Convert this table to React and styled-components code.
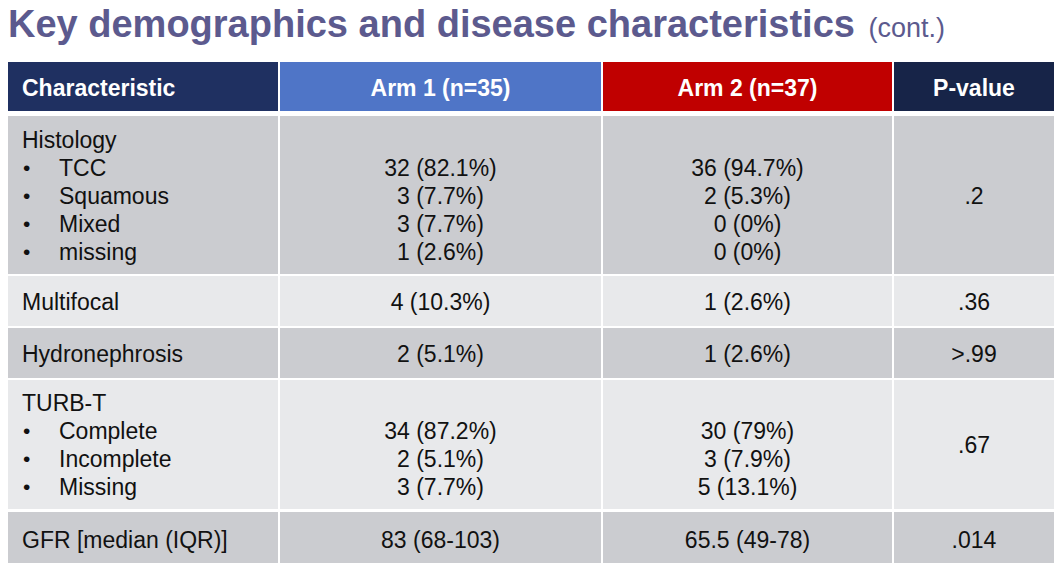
import React from 'react';
import styled, { createGlobalStyle } from 'styled-components';

const GlobalStyle = createGlobalStyle`
    body {
        margin: 0;
        background: #fff;
        font-family: "Liberation Sans", Arial, sans-serif;
    }
`;

const Page = styled.div`
    width: 1060px;
    height: 568px;
    padding: 5px 0 0 8px;
    box-sizing: border-box;
    overflow: hidden;
`;

const Title = styled.h1`
    margin: 0 0 19px 0;
    height: 38px;
    font-size: 38px;
    line-height: 38px;
    font-weight: bold;
    color: #5c5a8e;
    white-space: nowrap;
`;

const Cont = styled.span`
    font-size: 27px;
    line-height: 1;
    font-weight: normal;
    margin-left: 3px;
`;

const Table = styled.div`
    width: 1046px;
    display: flex;
    flex-direction: column;
    gap: 2px;
`;

const Row = styled.div`
    display: grid;
    grid-template-columns: 270px 321px 289px 160px;
    column-gap: 2px;
    height: ${(p) => p.h}px;
    margin-bottom: ${(p) => p.after || 0}px;
`;

const HeadCell = styled.div`
    background: ${(p) => p.bg};
    color: #fff;
    font-weight: bold;
    font-size: 23px;
    display: flex;
    align-items: center;
    justify-content: ${(p) => (p.left ? 'flex-start' : 'center')};
    padding-left: ${(p) => (p.left ? '14px' : '0')};
    padding-top: 3px;
`;

const Cell = styled.div`
    background: ${(p) => (p.light ? '#e8e9eb' : '#cbccd0')};
    color: #111;
    font-size: 23px;
    line-height: 28px;
    display: flex;
    flex-direction: column;
    justify-content: center;
    align-items: ${(p) => (p.left ? 'flex-start' : 'center')};
    padding-left: ${(p) => (p.left ? '14px' : '0')};
    padding-top: ${(p) => p.pt || 1}px;
    white-space: nowrap;
`;

const Line = styled.div`
    height: 28px;
`;

const Bullet = styled.div`
    display: flex;
    height: 28px;

    &::before {
        content: '•';
        width: 36px;
        padding-left: 1px;
        font-size: 21px;
    }
`;

const rows = [
    {
        label: 'Histology',
        items: ['TCC', 'Squamous', 'Mixed', 'missing'],
        a1: ['', '32 (82.1%)', '3 (7.7%)', '3 (7.7%)', '1 (2.6%)'],
        a2: ['', '36 (94.7%)', '2 (5.3%)', '0 (0%)', '0 (0%)'],
        p: '.2',
        h: 158,
    },
    { label: 'Multifocal', a1: ['4 (10.3%)'], a2: ['1 (2.6%)'], p: '.36', h: 50, light: true },
    { label: 'Hydronephrosis', a1: ['2 (5.1%)'], a2: ['1 (2.6%)'], p: '>.99', h: 50 },
    {
        label: 'TURB-T',
        items: ['Complete', 'Incomplete', 'Missing'],
        a1: ['', '34 (87.2%)', '2 (5.1%)', '3 (7.7%)'],
        a2: ['', '30 (79%)', '3 (7.9%)', '5 (13.1%)'],
        p: '.67',
        h: 129,
        light: true,
        after: 1,
    },
    { label: 'GFR [median (IQR)]', a1: ['83 (68-103)'], a2: ['65.5 (49-78)'], p: '.014', h: 51, pt: 4 },
];

const App = () => (
    <Page>
        <GlobalStyle />
        <Title>
            Key demographics and disease characteristics <Cont>(cont.)</Cont>
        </Title>
        <Table>
            <Row h={49} after={3}>
                <HeadCell bg="#1f3061" left>Characteristic</HeadCell>
                <HeadCell bg="#4f75c7">Arm 1 (n=35)</HeadCell>
                <HeadCell bg="#c00000">Arm 2 (n=37)</HeadCell>
                <HeadCell bg="#172448">P-value</HeadCell>
            </Row>
            {rows.map((r) => (
                <Row key={r.label} h={r.h} after={r.after}>
                    <Cell left light={r.light} pt={r.pt}>
                        <Line>{r.label}</Line>
                        {(r.items || []).map((it) => (
                            <Bullet key={it}>{it}</Bullet>
                        ))}
                    </Cell>
                    <Cell light={r.light} pt={r.pt}>
                        {r.a1.map((v, i) => (
                            <Line key={i}>{v}</Line>
                        ))}
                    </Cell>
                    <Cell light={r.light} pt={r.pt}>
                        {r.a2.map((v, i) => (
                            <Line key={i}>{v}</Line>
                        ))}
                    </Cell>
                    <Cell light={r.light} pt={r.pt}>
                        <Line>{r.p}</Line>
                    </Cell>
                </Row>
            ))}
        </Table>
    </Page>
);

export default App;
